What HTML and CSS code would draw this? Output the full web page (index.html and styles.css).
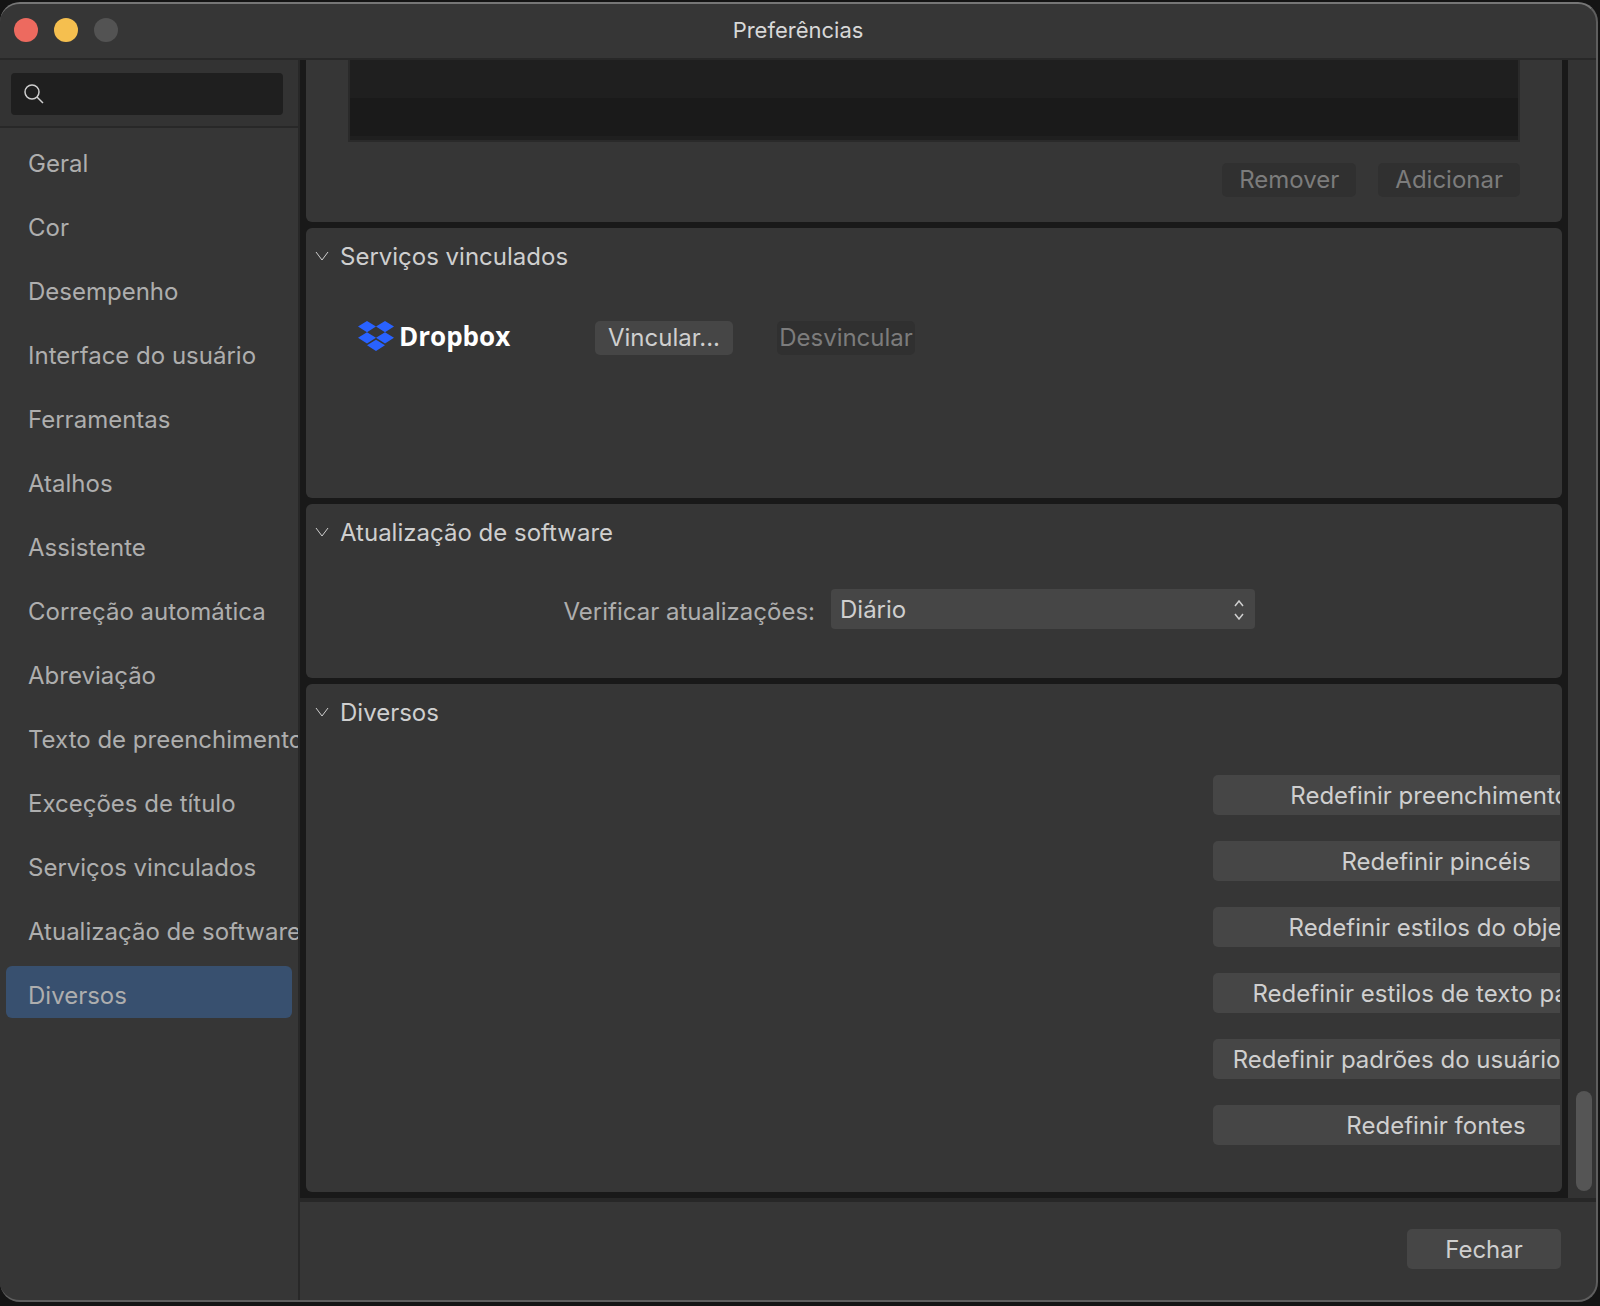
FILE: index.html
```html
<!DOCTYPE html>
<html lang="pt-BR">
<head>
<title>Preferências</title>
<meta charset="UTF-8">
<meta name="viewport" content="width=device-width, initial-scale=1.0">
<link rel="stylesheet" href="styles.css">
</head>
<body>
<div class="window">
<header class="titlebar">
<div class="lights">
<button type="button" class="light red" aria-label="Fechar janela"></button>
<button type="button" class="light yellow" aria-label="Minimizar"></button>
<button type="button" class="light gray" aria-label="Zoom" disabled></button>
</div>
<h1>Preferências</h1>
</header>
<div class="content">
<aside class="sidebar">
<div class="search">
<label class="search-box" for="search">
<svg width="20" height="20" viewBox="0 0 20 20" aria-hidden="true"><circle cx="8" cy="8" r="7"/><path d="M13 13l6 6"/></svg>
<input type="search" id="search" name="search" aria-label="Buscar">
</label>
</div>
<nav class="menu">
<a href="#geral">Geral</a>
<a href="#cor">Cor</a>
<a href="#desempenho">Desempenho</a>
<a href="#interface">Interface do usuário</a>
<a href="#ferramentas">Ferramentas</a>
<a href="#atalhos">Atalhos</a>
<a href="#assistente">Assistente</a>
<a href="#correcao">Correção automática</a>
<a href="#abreviacao">Abreviação</a>
<a href="#texto">Texto de preenchimento</a>
<a href="#excecoes">Exceções de título</a>
<a href="#servicos">Serviços vinculados</a>
<a href="#atualizacao">Atualização de software</a>
<a href="#diversos" class="active" aria-current="page">Diversos</a>
</nav>
</aside>
<div class="main">
<div class="scroll-area">
<main class="cards">
<section class="card card-top">
<div class="list">
<div class="list-row"></div>
<div class="list-row dark"></div>
</div>
<div class="list-actions">
<button type="button" class="btn small" disabled>Remover</button>
<button type="button" class="btn small" disabled>Adicionar</button>
</div>
</section>

<section class="card services" id="servicos">
<h2><button type="button" class="toggle" aria-expanded="true"><svg width="14" height="10" viewBox="0 0 14 10" aria-hidden="true"><path d="M1 1l6 8 6-8"/></svg><span>Serviços vinculados</span></button></h2>
<div class="service-row">
<div class="dropbox">
<svg width="36" height="30" viewBox="0 0 36 30" aria-hidden="true"><path d="M9 0l9 5.600-9 5.600-9-5.600zM27 0l9 5.600-9 5.600-9-5.600zM9 11.200l9 5.600-9 5.600-9-5.600zM27 11.200l9 5.600-9 5.600-9-5.600zM18 18.700l9 5.600-9 5.700-9-5.700z"/></svg>
<span>Dropbox</span>
</div>
<button type="button" class="btn small link">Vincular...</button>
<button type="button" class="btn small link" disabled>Desvincular</button>
</div>
</section>

<section class="card updates" id="atualizacao">
<h2><button type="button" class="toggle" aria-expanded="true"><svg width="14" height="10" viewBox="0 0 14 10" aria-hidden="true"><path d="M1 1l6 8 6-8"/></svg><span>Atualização de software</span></button></h2>
<div class="update-row">
<label for="updates">Verificar atualizações:</label>
<div class="select-box">
<select id="updates" name="updates">
<option>Diário</option>
</select>
<svg width="10" height="20" viewBox="0 0 10 20" aria-hidden="true"><path d="M1 6l4-5 4 5M1 14l4 5 4-5"/></svg>
</div>
</div>
</section>

<section class="card misc" id="diversos">
<h2><button type="button" class="toggle" aria-expanded="true"><svg width="14" height="10" viewBox="0 0 14 10" aria-hidden="true"><path d="M1 1l6 8 6-8"/></svg><span>Diversos</span></button></h2>
<div class="reset-list">
<button type="button" class="btn">Redefinir preenchimentos</button>
<button type="button" class="btn">Redefinir pincéis</button>
<button type="button" class="btn">Redefinir estilos do objeto</button>
<button type="button" class="btn">Redefinir estilos de texto padrão</button>
<button type="button" class="btn">Redefinir padrões do usuário salvos</button>
<button type="button" class="btn">Redefinir fontes</button>
</div>
</section>
</main>
<div class="scrollbar"><div class="thumb"></div></div>
</div>
<footer class="footer">
<button type="button" class="btn close">Fechar</button>
</footer>
</div>
</div>
</div>
</body>
</html>
```

FILE: styles.css
```css
*{
    box-sizing: border-box;
}
body{
    margin: 0;
    padding: 2px 2px 4px 0;
    background: #141414;
    color: #cfcfcf;
    font-family: Inter, "Liberation Sans", sans-serif;
    font-size: 24px;
    line-height: 28px;
}
button, input, select{
    font: inherit;
    color: inherit;
    border: 0;
    margin: 0;
    padding: 0;
    background: none;
}
svg{
    fill: none;
    stroke: #cfcfcf;
    stroke-width: 1.5;
    flex: none;
}
.window{
    display: flex;
    flex-direction: column;
    min-height: calc(100vh - 6px);
    background: #363636;
    border: 2px solid #5e5e5e;
    border-top-color: #767676;
    border-left: 0;
    border-radius: 20px;
    overflow: hidden;
}
.titlebar{
    display: grid;
    grid-template-columns: 1fr auto 1fr;
    align-items: center;
    height: 56px;
    padding: 0 14px 2px;
    border-bottom: 2px solid #282828;
}
.titlebar h1{
    margin: 0;
    font-size: 22px;
    font-weight: 400;
    color: #d8d8d8;
}
.lights{
    display: flex;
    gap: 16px;
}
.light{
    width: 24px;
    height: 24px;
    border-radius: 50%;
}
.red{
    background: #ed6a5f;
}
.yellow{
    background: #f5bf4f;
}
.gray{
    background: #535353;
}
.content{
    display: flex;
    flex: 1;
}

/* sidebar */
.sidebar{
    width: 300px;
    flex: none;
    border-right: 2px solid #282828;
    overflow: hidden;
}
.search{
    padding: 13px 15px 11px 11px;
    background: #333;
    border-bottom: 2px solid #282828;
}
.search-box{
    display: flex;
    align-items: center;
    gap: 10px;
    height: 42px;
    padding: 0 13px;
    background: #1f1f1f;
    border-radius: 4px;
}
.search-box input{
    flex: 1;
    min-width: 0;
    outline: none;
}
.menu{
    display: flex;
    flex-direction: column;
    gap: 12px;
    padding: 6px;
}
.menu a{
    height: 52px;
    padding: 16px 0 0 22px;
    border-radius: 6px;
    color: #aeaeae;
    text-decoration: none;
    white-space: nowrap;
}
.menu .active{
    background: #38506f;
}

/* settings */
.main{
    display: flex;
    flex-direction: column;
    flex: 1;
    min-width: 0;
}
.scroll-area{
    display: flex;
    border-bottom: 4px solid #272727;
}
.cards{
    display: flex;
    flex-direction: column;
    gap: 6px;
    flex: 1;
    min-width: 0;
    padding: 0 6px 6px;
    background: #191919;
}
.card{
    background: #363636;
    border-radius: 6px;
}
.card-top{
    padding: 0 42px 25px;
    border-radius: 0 0 6px 6px;
}
.card h2{
    margin: 0;
    font-size: 24px;
    font-weight: 400;
}
.toggle{
    display: flex;
    align-items: center;
    gap: 11px;
    height: 56px;
    padding-left: 9px;
}
.toggle span{
    padding-top: 2px;
}
.toggle svg{
    stroke-width: 1;
}
.list{
    padding-bottom: 4px;
    background: #1f1f1f;
    border: 2px solid #2a2a2a;
    border-top: 0;
}
.list-row{
    height: 38px;
}
.dark{
    background: #1a1a1a;
}
.list-actions{
    display: flex;
    justify-content: flex-end;
    gap: 22px;
    padding-top: 21px;
}
.btn{
    height: 40px;
    padding: 2px 16px 0;
    background: #464646;
    border-radius: 5px;
    white-space: nowrap;
}
.btn:disabled{
    background: #303030;
    color: #7c7c7c;
}
.small{
    height: 34px;
    padding: 0 17px;
}
.services{
    min-height: 270px;
}
.service-row{
    display: flex;
    align-items: center;
    gap: 44px;
    padding: 37px 52px;
}
.dropbox{
    display: flex;
    align-items: center;
    gap: 5px;
    width: 193px;
    padding-bottom: 4px;
    color: #fff;
    font-family: "Open Sans", sans-serif;
    font-size: 26px;
    font-weight: 700;
}
.dropbox svg{
    fill: #2962ff;
    stroke: none;
}
.link{
    width: 138px;
    padding: 0;
}
.updates{
    padding-bottom: 49px;
}
.update-row{
    display: flex;
    align-items: center;
    gap: 16px;
    padding-top: 29px;
}
.update-row label{
    width: 509px;
    padding-top: 6px;
    text-align: right;
    color: #aeaeae;
}
.select-box{
    position: relative;
    width: 424px;
}
.select-box select{
    appearance: none;
    display: block;
    width: 100%;
    height: 40px;
    padding: 2px 40px 0 9px;
    background: #464646;
    border-radius: 4px;
}
.select-box svg{
    position: absolute;
    top: 11px;
    right: 11px;
    pointer-events: none;
}
.misc{
    padding-bottom: 47px;
}
.reset-list{
    display: flex;
    flex-direction: column;
    gap: 26px;
    width: 347px;
    margin: 35px 2px 0 auto;
    overflow: hidden;
}
.reset-list .btn{
    width: 446px;
}
.scrollbar{
    display: flex;
    align-items: flex-end;
    width: 28px;
    padding: 0 4px 7px 8px;
    background: #333;
}
.thumb{
    width: 16px;
    height: 100px;
    background: #555;
    border-radius: 8px;
}
.footer{
    display: flex;
    justify-content: flex-end;
    padding: 27px 35px 27px 0;
}
.close{
    width: 154px;
}
```
